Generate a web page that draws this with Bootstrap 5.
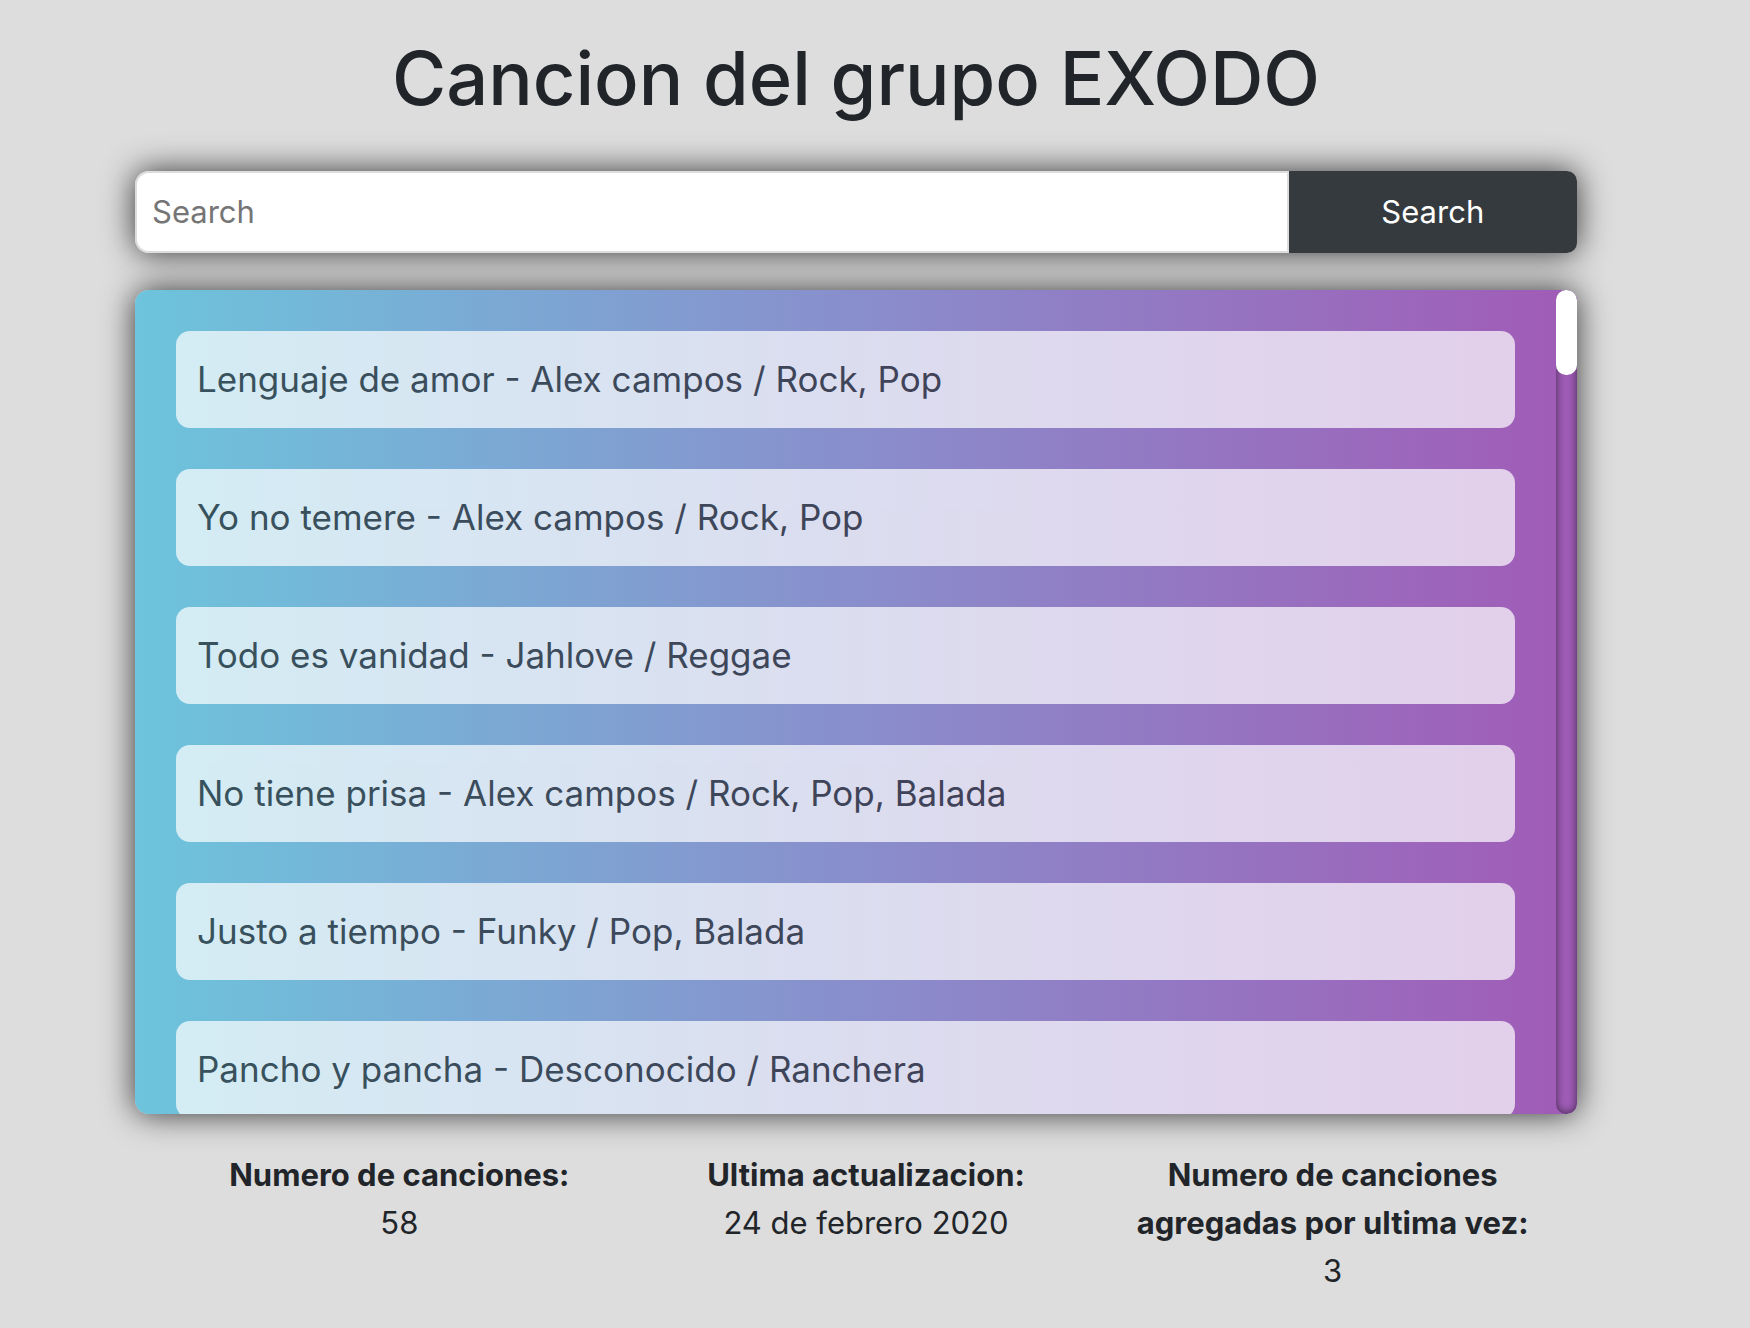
<!DOCTYPE html>
<html lang="es">
<head>
<meta charset="utf-8">
<meta name="viewport" content="width=device-width, initial-scale=1">
<title>Cancion del grupo EXODO</title>
<link rel="stylesheet" href="https://cdn.jsdelivr.net/npm/bootstrap@5.3.0/dist/css/bootstrap.min.css">
<style>
body{background:#ddd;color:#212529;font-family:Inter,"Liberation Sans",sans-serif;font-size:31px;line-height:48px;overflow-x:hidden}
.page{padding:32px 173px 32px 135px}
.page-title{font-size:74px;line-height:92px;font-weight:500;margin-bottom:47px}
.soft-shadow{box-shadow:0 0 32px rgba(0,0,0,.77)}
.search-bar{height:82px;border-radius:14px 10px 10px 14px}
.search-text{width:80%;border:2px solid #ddd;border-radius:14px 0 0 14px;padding:0 15px;outline-offset:-2px}
.search-text::placeholder{color:#757575;opacity:1}
.search-btn{width:20%;background:#353a3e;border-radius:0 10px 10px 0}
.panel{height:824px;margin-top:37px;border-radius:14px 10px 10px 14px;background:linear-gradient(90deg,#6dc4dc 0%,#8a8ccb 52%,#a05db8 98%)}
.songs{padding:41px;gap:41px;overflow-y:auto;scrollbar-width:none}
.songs::-webkit-scrollbar{display:none}
.song{opacity:.7;border-radius:14px;padding:22px 21px;font-size:35px;line-height:53px}
.track{width:21px;border-radius:10px;box-shadow:inset 0 0 10px rgba(0,0,0,.6)}
.thumb{height:85px;border-radius:10px}
.stats{padding:37px 11px 0 31px}
</style>
</head>
<body>
<main class="page">
<h1 class="page-title text-center">Cancion del grupo EXODO</h1>
<form class="search-bar soft-shadow d-flex" role="search" onsubmit="return false">
<input class="search-text bg-white" type="search" placeholder="Search" aria-label="Search">
<button class="search-btn border-0 text-white" type="submit">Search</button>
</form>
<section class="panel soft-shadow d-flex overflow-hidden">
<ul class="songs list-unstyled d-flex flex-column flex-grow-1 mb-0">
<li class="song bg-white">Lenguaje de amor - Alex campos / Rock, Pop</li>
<li class="song bg-white">Yo no temere - Alex campos / Rock, Pop</li>
<li class="song bg-white">Todo es vanidad - Jahlove / Reggae</li>
<li class="song bg-white">No tiene prisa - Alex campos / Rock, Pop, Balada</li>
<li class="song bg-white">Justo a tiempo - Funky / Pop, Balada</li>
<li class="song bg-white">Pancho y pancha - Desconocido / Ranchera</li>
</ul>
<div class="track flex-shrink-0" aria-hidden="true"><div class="thumb bg-white"></div></div>
</section>
<footer class="stats d-flex text-center">
<div class="col-4 px-4"><strong class="d-block">Numero de canciones:</strong>58</div>
<div class="col-4 px-4"><strong class="d-block">Ultima actualizacion:</strong>24 de febrero 2020</div>
<div class="col-4 px-4"><strong class="d-block">Numero de canciones agregadas por ultima vez:</strong>3</div>
</footer>
</main>
<script src="https://cdn.jsdelivr.net/npm/bootstrap@5.3.0/dist/js/bootstrap.bundle.min.js"></script>
</body>
</html>
